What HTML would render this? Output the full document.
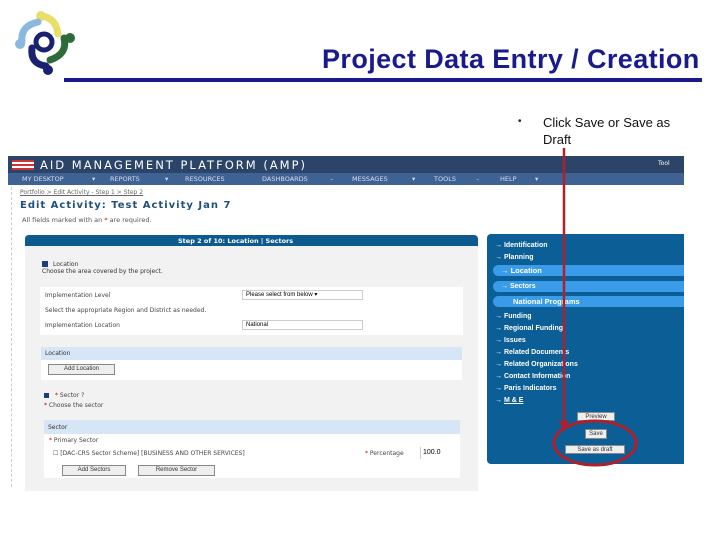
<!DOCTYPE html>
<html><head><meta charset="utf-8"><style>
*{margin:0;padding:0;box-sizing:border-box}
body{width:720px;height:540px;background:#fff;position:relative;overflow:hidden;font-family:"Liberation Sans",sans-serif}
.a{position:absolute}
.t{font-family:"DejaVu Sans","Liberation Sans",sans-serif}
.side div{position:absolute;left:8px;color:#fff;font-size:7px;font-weight:bold;white-space:nowrap}
.btn{position:absolute;background:#eee;border:1px solid #888;font-size:6px;color:#333;text-align:center;line-height:9px}
</style></head><body>
<svg class="a" style="left:8px;top:8px" width="70" height="68" viewBox="0 0 70 68">
<path d="M34 8 Q48 10 50 26" stroke="#e8df6a" stroke-width="7" fill="none" stroke-linecap="round"/>
<circle cx="33" cy="8" r="5" fill="#e8df6a"/>
<path d="M14 34 Q12 18 30 14" stroke="#8ab8df" stroke-width="7" fill="none" stroke-linecap="round"/>
<circle cx="12" cy="36" r="5" fill="#8ab8df"/>
<path d="M56 30 Q60 46 42 52" stroke="#2d6b3a" stroke-width="7" fill="none" stroke-linecap="round"/>
<circle cx="62" cy="30" r="5" fill="#2d6b3a"/>
<path d="M24 40 Q22 56 38 58" stroke="#1b2170" stroke-width="7" fill="none" stroke-linecap="round"/>
<circle cx="40" cy="62" r="5" fill="#1b2170"/>
<circle cx="36" cy="34" r="8" fill="none" stroke="#1b2170" stroke-width="5"/>
</svg>
<div class="a" style="left:64px;top:78px;width:638px;height:4px;background:#1a1a8c"></div>
<div class="a" style="left:322px;top:44px;font-size:27px;font-weight:bold;color:#1a1a8c;white-space:nowrap;letter-spacing:0.4px">Project Data Entry / Creation</div>
<div class="a" style="left:518px;top:116px;font-size:10px;color:#222">•</div>
<div class="a" style="left:543px;top:114px;font-size:13px;line-height:17px;color:#111;width:150px">Click Save or Save as Draft</div>

<div class="a" style="left:8px;top:156px;width:676px;height:17px;background:#2b4468"></div>
<div class="a" style="left:12px;top:160px;width:22px;height:10px;background:repeating-linear-gradient(#c33 0 2px,#fff 2px 4px)"></div>
<div class="a t" style="left:40px;top:158px;font-size:11.5px;color:#fff;letter-spacing:2px;white-space:nowrap">AID MANAGEMENT PLATFORM (AMP)</div>
<div class="a t" style="left:658px;top:160px;font-size:6px;color:#fff">Tool</div>
<div class="a" style="left:8px;top:173px;width:676px;height:12px;background:#3e6294"></div>
<div class="a t" style="top:175px;font-size:6.5px;color:#dde;white-space:nowrap;left:22px">MY DESKTOP</div>
<div class="a t" style="top:175px;font-size:6.5px;color:#dde;left:92px">▾</div>
<div class="a t" style="top:175px;font-size:6.5px;color:#dde;left:110px">REPORTS</div>
<div class="a t" style="top:175px;font-size:6.5px;color:#dde;left:165px">▾</div>
<div class="a t" style="top:175px;font-size:6.5px;color:#dde;left:185px">RESOURCES</div>
<div class="a t" style="top:175px;font-size:6.5px;color:#dde;left:262px">DASHBOARDS</div>
<div class="a t" style="top:175px;font-size:6.5px;color:#dde;left:330px">–</div>
<div class="a t" style="top:175px;font-size:6.5px;color:#dde;left:352px">MESSAGES</div>
<div class="a t" style="top:175px;font-size:6.5px;color:#dde;left:412px">▾</div>
<div class="a t" style="top:175px;font-size:6.5px;color:#dde;left:434px">TOOLS</div>
<div class="a t" style="top:175px;font-size:6.5px;color:#dde;left:476px">–</div>
<div class="a t" style="top:175px;font-size:6.5px;color:#dde;left:500px">HELP</div>
<div class="a t" style="top:175px;font-size:6.5px;color:#dde;left:535px">▾</div>
<div class="a" style="left:11px;top:187px;width:1px;height:300px;border-left:1px dashed #ccc"></div>
<div class="a t" style="left:20px;top:189px;font-size:6px;color:#666;text-decoration:underline">Portfolio &gt; Edit Activity - Step 1 &gt; Step 2</div>
<div class="a t" style="left:20px;top:200px;font-size:10px;font-weight:bold;color:#1f4f7f;letter-spacing:1px">Edit Activity: Test Activity Jan 7</div>
<div class="a t" style="left:22px;top:216px;font-size:6.5px;color:#555">All fields marked with an <span style="color:#c00">*</span> are required.</div>

<div class="a" style="left:25px;top:235px;width:453px;height:256px;background:#f2f2f2"></div>
<div class="a" style="left:25px;top:235px;width:453px;height:11px;background:#0d5a8e;border-radius:4px 4px 0 0"></div>
<div class="a t" style="left:178px;top:237px;font-size:6.5px;font-weight:bold;color:#fff">Step 2 of 10: Location | Sectors</div>
<div class="a" style="left:42px;top:261px;width:6px;height:6px;background:#1b3f7a"></div>
<div class="a t" style="left:53px;top:261px;font-size:6px;color:#333">Location</div>
<div class="a t" style="left:42px;top:268px;font-size:6px;color:#333">Choose the area covered by the project.</div>
<div class="a" style="left:40px;top:287px;width:423px;height:48px;background:#fff"></div>
<div class="a t" style="left:45px;top:292px;font-size:6px;color:#444">Implementation Level</div>
<div class="a" style="left:242px;top:290px;width:121px;height:10px;border:1px solid #ccc;background:#fff;font-size:6px;padding-left:3px;line-height:8px">Please select from below ▾</div>
<div class="a t" style="left:45px;top:307px;font-size:6px;color:#444">Select the appropriate Region and District as needed.</div>
<div class="a t" style="left:45px;top:322px;font-size:6px;color:#444">Implementation Location</div>
<div class="a" style="left:242px;top:320px;width:121px;height:10px;border:1px solid #ccc;background:#fff;font-size:6px;padding-left:3px;line-height:8px">National</div>
<div class="a" style="left:41px;top:347px;width:421px;height:13px;background:#d6e6f7"></div>
<div class="a t" style="left:45px;top:350px;font-size:6px;color:#333">Location</div>
<div class="a" style="left:41px;top:360px;width:421px;height:20px;background:#fff"></div>
<div class="btn" style="left:48px;top:364px;width:67px;height:11px">Add Location</div>
<div class="a" style="left:44px;top:393px;width:5px;height:5px;background:#1b3f7a"></div>
<div class="a t" style="left:55px;top:392px;font-size:6px;color:#444"><span style="color:#c00">*</span> Sector ?</div>
<div class="a t" style="left:44px;top:402px;font-size:6px;color:#444"><span style="color:#c00">*</span> Choose the sector</div>
<div class="a" style="left:44px;top:420px;width:416px;height:14px;background:#d6e6f7"></div>
<div class="a t" style="left:48px;top:424px;font-size:6px;color:#333">Sector</div>
<div class="a" style="left:44px;top:434px;width:416px;height:44px;background:#fff"></div>
<div class="a t" style="left:49px;top:437px;font-size:6px;color:#444"><span style="color:#c00">*</span> Primary Sector</div>
<div class="a t" style="left:53px;top:450px;font-size:6px;color:#444;white-space:nowrap">☐ [DAC-CRS Sector Scheme] [BUSINESS AND OTHER SERVICES]</div>
<div class="a t" style="left:365px;top:450px;font-size:6px;color:#444"><span style="color:#c00">*</span> Percentage</div>
<div class="a" style="left:420px;top:447px;width:32px;height:12px;border-left:1px solid #ccc;font-size:7px;padding-left:2px;line-height:12px">100.0</div>
<div class="btn" style="left:62px;top:465px;width:64px;height:11px">Add Sectors</div>
<div class="btn" style="left:138px;top:465px;width:77px;height:11px">Remove Sector</div>

<div class="a side" style="left:487px;top:234px;width:197px;height:230px;background:#0b5f96;border-radius:4px 0 0 4px">
<div style="top:8px">→ Identification</div>
<div style="top:20px">→ Planning</div>
<div style="left:6px;top:31px;width:191px;height:11px;background:#3a9be8;border-radius:6px 0 0 6px;padding-left:8px;font-size:7.5px;line-height:11px">→ Location</div>
<div style="left:6px;top:47px;width:191px;height:11px;background:#3a9be8;border-radius:6px 0 0 6px;padding-left:8px;line-height:11px">→ Sectors</div>
<div style="left:6px;top:62px;width:191px;height:11px;background:#3a9be8;border-radius:6px 0 0 6px;padding-left:20px;font-size:7.5px;line-height:11px">National Programs</div>
<div style="top:79px">→ Funding</div>
<div style="top:91px">→ Regional Funding</div>
<div style="top:103px">→ Issues</div>
<div style="top:115px">→ Related Documents</div>
<div style="top:127px">→ Related Organizations</div>
<div style="top:139px">→ Contact Information</div>
<div style="top:151px">→ Paris Indicators</div>
<div style="top:163px">→ <u>M &amp; E</u></div>
</div>
<div class="btn" style="left:577px;top:412px;width:38px;height:9px">Preview</div>
<div class="btn" style="left:585px;top:429px;width:22px;height:10px">Save</div>
<div class="btn" style="left:565px;top:445px;width:60px;height:9px">Save as draft</div>

<svg class="a" style="left:0;top:0" width="720" height="540">
<line x1="564" y1="148" x2="564" y2="425" stroke="#b0202c" stroke-width="2.5"/>
<path d="M559 421 L564 432 L569 421 Z" fill="#b0202c"/>
<ellipse cx="595" cy="443" rx="41" ry="22" fill="none" stroke="#b0202c" stroke-width="3"/>
</svg>
</body></html>
